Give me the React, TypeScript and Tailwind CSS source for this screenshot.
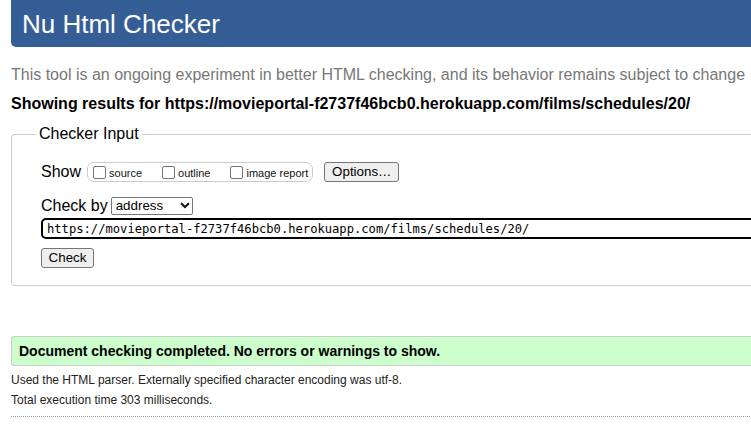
import React from 'react';

const CHECK_URL = 'https://movieportal-f2737f46bcb0.herokuapp.com/films/schedules/20/';

const SHOW_OPTIONS = [
  { id: 'show-source', label: 'source' },
  { id: 'show-outline', label: 'outline' },
  { id: 'show-image-report', label: 'image report' },
];

const ShowToggles: React.FC = () => (
  <div className="ml-[6px] flex h-[20px] items-center rounded-[7px] border border-[#cccccc] pl-[1px] pr-[4px]">
    {SHOW_OPTIONS.map(({ id, label }, i) => (
      <label
        key={id}
        htmlFor={id}
        className={`flex items-center text-[11px] leading-[13px] text-[#111] ${
          i < SHOW_OPTIONS.length - 1 ? 'mr-[16px]' : ''
        }`}
      >
        <input
          id={id}
          type="checkbox"
          className="ml-[4px] mr-[3px] h-[13px] w-[13px] appearance-none rounded-[2px] border border-[#767676] bg-white"
        />
        <span className="pt-[2px]">{label}</span>
      </label>
    ))}
  </div>
);

export default function App() {
  return (
    <div className="h-[424px] w-[751px] overflow-hidden bg-white font-['Liberation_Sans',Arial,sans-serif] text-black">
      <div className="w-[820px] pl-[11px]">
        {/* banner */}
        <header className="flex h-[47px] items-center rounded-b-[5px] bg-[#365e96] pl-[11px]">
          <h1 className="text-[26px] leading-[30px] font-normal text-white">Nu Html Checker</h1>
        </header>

        <p className="mt-[19px] text-[16px] leading-[18px] text-[#777]">
          This tool is an ongoing experiment in better HTML checking, and its behavior remains subject to change
        </p>
        <p className="mt-[11px] text-[16px] leading-[18px] font-bold">
          Showing results for {CHECK_URL}
        </p>

        <form className="mt-[12px]" onSubmit={(e) => e.preventDefault()}>
          <fieldset className="rounded-[4px] border border-[#cccccc] pl-[24px] pb-[17px]">
            <legend className="px-[3px] text-[16px] leading-[18px]">Checker Input</legend>
            <div className="pl-[5px] pt-[19px]">
              <div className="flex h-[20px] items-center">
                <span className="text-[16px] leading-[18px]">Show</span>
                <ShowToggles />
                <button
                  type="button"
                  className="ml-[11px] h-[20px] w-[75px] rounded-[3px] border border-[#767676] bg-[#efefef] text-[13.33px] leading-[16px]"
                >
                  Options…
                </button>
              </div>

              <div className="mt-[15px] flex h-[18px] items-center">
                <label htmlFor="docselect" className="text-[16px] leading-[18px]">
                  Check by
                </label>
                <div className="relative ml-[3px]">
                  <select
                    id="docselect"
                    defaultValue="address"
                    className="block h-[18px] w-[82px] appearance-none rounded-[2px] border border-[#767676] bg-white pl-[4px] text-[13.33px] leading-[16px]"
                  >
                    <option value="address">address</option>
                    <option value="file">file upload</option>
                    <option value="text">text input</option>
                  </select>
                  <svg
                    className="pointer-events-none absolute right-[3px] top-[5px]"
                    width="10"
                    height="7"
                    viewBox="0 0 10 7"
                  >
                    <path d="M1 1.2 L5 5 L9 1.2" fill="none" stroke="#111" strokeWidth="2" />
                  </svg>
                </div>
              </div>

              <input
                type="url"
                defaultValue={CHECK_URL}
                className="mt-[3px] block h-[21px] w-[790px] rounded-[5px] border-2 border-black px-[4px] font-['DejaVu_Sans_Mono',monospace] text-[12.15px] leading-[15px] outline-none"
              />

              <button
                type="submit"
                className="mt-[9px] block h-[20px] w-[53px] rounded-[3px] border border-[#767676] bg-[#efefef] text-[13.33px] leading-[16px]"
              >
                Check
              </button>
            </div>
          </fieldset>
        </form>

        <div className="mt-[50px] flex h-[30px] items-center rounded-l-[3px] border-y border-l border-[#cccccc] bg-[#ccffcc] pl-[7px]">
          <p className="text-[14px] leading-[16px] font-bold">
            Document checking completed. No errors or warnings to show.
          </p>
        </div>

        <p className="mt-[7px] text-[12px] leading-[14px] text-[#222]">
          Used the HTML parser. Externally specified character encoding was utf-8.
        </p>
        <p className="mt-[6px] text-[12px] leading-[14px] text-[#222]">Total execution time 303 milliseconds.</p>

        <hr className="mt-[9px] border-0 border-t border-dotted border-[#999]" />
      </div>
    </div>
  );
}
